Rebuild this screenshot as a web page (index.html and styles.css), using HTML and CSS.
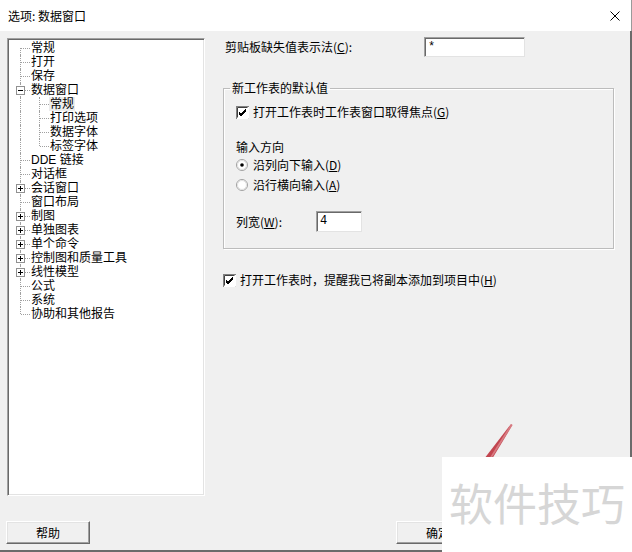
FILE: index.html
```html
<!DOCTYPE html>
<html lang="zh-CN">
<head>
<meta charset="utf-8">
<title>选项: 数据窗口</title>
<link rel="stylesheet" href="styles.css">
</head>
<body>
<div class="window">
  <div class="titlebar">
    <span class="title">选项: 数据窗口</span>
    <svg class="close" width="10" height="10" viewBox="0 0 10 10"><path d="M0.5 0.5 L9.5 9.5 M9.5 0.5 L0.5 9.5" stroke="#000" stroke-width="1" fill="none"/></svg>
  </div>
  <div class="client">
    <div class="main">
      <div class="tree">
        <div class="row"><span class="g first"></span><span class="lbl">常规</span></div>
        <div class="row"><span class="g tee"></span><span class="lbl">打开</span></div>
        <div class="row"><span class="g tee"></span><span class="lbl">保存</span></div>
        <div class="row"><span class="g tee"><i class="box minus"></i></span><span class="lbl">数据窗口</span></div>
        <div class="row"><span class="g pipe"></span><span class="g tee"></span><span class="lbl sel">常规</span></div>
        <div class="row"><span class="g pipe"></span><span class="g tee"></span><span class="lbl">打印选项</span></div>
        <div class="row"><span class="g pipe"></span><span class="g tee"></span><span class="lbl">数据字体</span></div>
        <div class="row"><span class="g pipe"></span><span class="g end"></span><span class="lbl">标签字体</span></div>
        <div class="row"><span class="g tee"></span><span class="lbl">DDE 链接</span></div>
        <div class="row"><span class="g tee"></span><span class="lbl">对话框</span></div>
        <div class="row"><span class="g tee"><i class="box plus"></i></span><span class="lbl">会话窗口</span></div>
        <div class="row"><span class="g tee"></span><span class="lbl">窗口布局</span></div>
        <div class="row"><span class="g tee"><i class="box plus"></i></span><span class="lbl">制图</span></div>
        <div class="row"><span class="g tee"><i class="box plus"></i></span><span class="lbl">单独图表</span></div>
        <div class="row"><span class="g tee"><i class="box plus"></i></span><span class="lbl">单个命令</span></div>
        <div class="row"><span class="g tee"><i class="box plus"></i></span><span class="lbl">控制图和质量工具</span></div>
        <div class="row"><span class="g tee"><i class="box plus"></i></span><span class="lbl">线性模型</span></div>
        <div class="row"><span class="g tee"></span><span class="lbl">公式</span></div>
        <div class="row"><span class="g tee"></span><span class="lbl">系统</span></div>
        <div class="row"><span class="g end"></span><span class="lbl">协助和其他报告</span></div>
      </div>
      <div class="panel">
        <div class="field-row">
          <span class="field-label">剪贴板缺失值表示法(<u>C</u>):</span>
          <div class="edit wide">*</div>
        </div>
        <fieldset class="group">
          <legend>新工作表的默认值</legend>
          <div class="opt focus-opt">
            <svg class="chk" width="13" height="13" viewBox="0 0 13 13"><rect x="0.5" y="0.5" width="12" height="12" fill="#fff" stroke="#808080"/><path d="M1 12.5 H12.5 V1" stroke="#fff" fill="none"/><path d="M1.5 11.5 V1.5 H11.5" stroke="#404040" fill="none"/><path d="M3 6 L5 8 L10 3 M3 7 L5 9 L10 4 M3 8 L5 10 L10 5" stroke="#000" stroke-width="1" fill="none"/></svg>
            <span class="txt">打开工作表时工作表窗口取得焦点(<u>G</u>)</span>
          </div>
          <div class="sub-head">输入方向</div>
          <div class="opt radio-opt first-radio">
            <svg class="rad" width="12" height="12" viewBox="0 0 12 12"><circle cx="6" cy="6" r="5.5" fill="#fff" stroke="#a0a0a0"/><circle cx="6" cy="6" r="4.5" fill="#fff" stroke="#e0e0e0"/><circle cx="6" cy="6" r="1.8" fill="#000"/></svg>
            <span class="txt">沿列向下输入(<u>D</u>)</span>
          </div>
          <div class="opt radio-opt">
            <svg class="rad" width="12" height="12" viewBox="0 0 12 12"><circle cx="6" cy="6" r="5.5" fill="#fff" stroke="#a0a0a0"/><circle cx="6" cy="6" r="4.5" fill="#fff" stroke="#e0e0e0"/></svg>
            <span class="txt">沿行横向输入(<u>A</u>)</span>
          </div>
          <div class="field-row width-row">
            <span class="width-label">列宽(<u>W</u>):</span>
            <div class="edit narrow">4</div>
          </div>
        </fieldset>
        <div class="opt remind-opt">
          <svg class="chk" width="13" height="13" viewBox="0 0 13 13"><rect x="0.5" y="0.5" width="12" height="12" fill="#fff" stroke="#808080"/><path d="M1 12.5 H12.5 V1" stroke="#fff" fill="none"/><path d="M1.5 11.5 V1.5 H11.5" stroke="#404040" fill="none"/><path d="M3 6 L5 8 L10 3 M3 7 L5 9 L10 4 M3 8 L5 10 L10 5" stroke="#000" stroke-width="1" fill="none"/></svg>
          <span class="txt">打开工作表时，提醒我已将副本添加到项目中(<u>H</u>)</span>
        </div>
      </div>
    </div>
    <div class="buttons">
      <div class="btn help"><span class="txt">帮助</span></div>
      <div class="btn ok"><span class="txt">确定</span></div>
    </div>
  </div>
  <svg class="pen" width="632" height="552" viewBox="0 0 632 552"><polygon points="511,424 512.5,425 492,459 484,459" fill="#c2454f"/><polygon points="511,424 512.5,425 491,459 489,459" fill="#e7a0a5" opacity="0.6"/></svg>
  <div class="watermark">软件技巧</div>
</div>
</body>
</html>
```

FILE: styles.css
```css
html, body {
  margin: 0;
  padding: 0;
}
body {
  width: 632px;
  height: 552px;
  overflow: hidden;
  font-family: "Noto Sans CJK SC", "Liberation Sans", sans-serif;
  font-size: 12px;
  color: #000;
  background: #fff;
}
.window {
  position: relative;
  width: 632px;
  height: 552px;
  display: flex;
  flex-direction: column;
}
.titlebar {
  height: 31px;
  flex: none;
  background: #fff;
  display: flex;
  align-items: center;
  justify-content: space-between;
  padding: 0 11px 0 8px;
  border-right: 1px solid #9a9a9a;
  box-sizing: border-box;
}
.title {
  display: inline-block;
  font-size: 12px;
  line-height: 14px;
  color: #000;
}
.close {
  display: block;
}
.client {
  flex: 1;
  background: #f0f0f0;
  border-right: 2px solid #6b6b6b;
  border-bottom: 2px solid #6b6b6b;
  padding: 7px 0 0 7px;
  display: flex;
  flex-direction: column;
}
.main {
  display: flex;
  height: 458px;
  flex: none;
}
.tree {
  width: 198px;
  height: 458px;
  box-sizing: border-box;
  background: #fff;
  border: 1px solid;
  border-color: #a0a0a0 #ffffff #ffffff #a0a0a0;
  box-shadow: inset 1px 1px 0 #696969, inset -1px -1px 0 #e3e3e3;
  padding: 2px 0 0 3px;
  font-family: "Liberation Sans", "Noto Sans CJK SC", sans-serif;
}
.row {
  display: flex;
  align-items: center;
  height: 14px;
  line-height: 14px;
  white-space: nowrap;
}
.g {
  position: relative;
  width: 19px;
  height: 14px;
  flex: none;
}
.g::before {
  content: "";
  position: absolute;
  left: 9px;
  top: 0;
  bottom: 0;
  border-left: 1px dotted #a0a0a0;
}
.g.first::before { top: 7px; }
.g.end::before { bottom: 7px; }
.g::after {
  content: "";
  position: absolute;
  left: 10px;
  width: 9px;
  top: 7px;
  border-top: 1px dotted #a0a0a0;
}
.g.pipe::after { display: none; }
.box {
  position: absolute;
  left: 5px;
  top: 3px;
  width: 9px;
  height: 9px;
  box-sizing: border-box;
  border: 1px solid #919191;
  background: #fff;
  z-index: 1;
}
.box::before {
  content: "";
  position: absolute;
  left: 1px;
  top: 3px;
  width: 5px;
  height: 1px;
  background: #000;
}
.box.plus::after {
  content: "";
  position: absolute;
  left: 3px;
  top: 1px;
  width: 1px;
  height: 5px;
  background: #000;
}
.lbl {
  display: inline-block;
  height: 14px;
  line-height: 14px;
  margin-left: 1px;
}
.lbl.sel {
  background: #ececec;
  margin-left: 0;
  padding: 0 1px;
}
.txt {
  display: inline-block;
  height: 14px;
  line-height: 14px;
}
.panel {
  flex: 1;
  padding: 0 16px 0 18px;
  display: flex;
  flex-direction: column;
}
.field-row {
  display: flex;
  align-items: center;
}
.panel > .field-row {
  margin-top: -1px;
}
.field-label {
  display: inline-block;
  line-height: 14px;
  width: 199px;
  margin-left: 2px;
  flex: none;
}
.edit {
  box-sizing: border-box;
  background: #fff;
  border: 1px solid;
  border-color: #a0a0a0 #e3e3e3 #e3e3e3 #a0a0a0;
  box-shadow: inset 1px 1px 0 #696969;
  padding: 1px 0 0 3px;
  font-family: "Liberation Mono", "Noto Sans CJK SC", monospace;
  font-size: 12px;
  line-height: 16px;
}
.edit.wide {
  width: 101px;
  height: 20px;
}
.edit.narrow {
  width: 46px;
  height: 21px;
}
.group {
  margin: 24px 0 0 0;
  padding: 0 12px 16px 12px;
  border: 1px solid #bcbcbc;
  box-shadow: 1px 1px 0 #fff, inset 1px 1px 0 #fff;
  min-width: 0;
}
.group legend {
  padding: 0 2px;
  margin-left: -6px;
  line-height: 14px;
}
.opt {
  display: flex;
  align-items: center;
  height: 14px;
  line-height: 14px;
  white-space: nowrap;
}
.opt .chk {
  flex: none;
  margin-right: 4px;
}
.opt .rad {
  flex: none;
  margin-right: 5px;
}
.focus-opt {
  margin-top: 10px;
}
.sub-head {
  margin-top: 21px;
  line-height: 14px;
  height: 14px;
}
.first-radio {
  margin-top: 4px;
}
.radio-opt + .radio-opt {
  margin-top: 6px;
}
.width-row {
  margin-top: 19px;
}
.width-label {
  display: inline-block;
  line-height: 14px;
  width: 80px;
  flex: none;
}
.remind-opt {
  margin-top: 24px;
}
.buttons {
  display: flex;
  margin-top: 25px;
  margin-left: -1px;
}
.btn {
  width: 84px;
  height: 23px;
  box-sizing: border-box;
  background: #f0f0f0;
  border: 1px solid;
  border-color: #ffffff #696969 #696969 #ffffff;
  box-shadow: inset -1px -1px 0 #a0a0a0, inset 1px 1px 0 #e3e3e3;
  display: flex;
  align-items: center;
  justify-content: center;
}
.btn.ok {
  margin-left: 306px;
}
.pen {
  position: absolute;
  left: 0;
  top: 0;
  pointer-events: none;
}
.watermark {
  position: absolute;
  left: 442px;
  top: 457px;
  width: 190px;
  height: 95px;
  background: #fff;
  color: #d6d6d6;
  font-size: 44px;
  line-height: 44px;
  padding: 23px 0 0 7px;
  box-sizing: border-box;
  white-space: nowrap;
}
```
